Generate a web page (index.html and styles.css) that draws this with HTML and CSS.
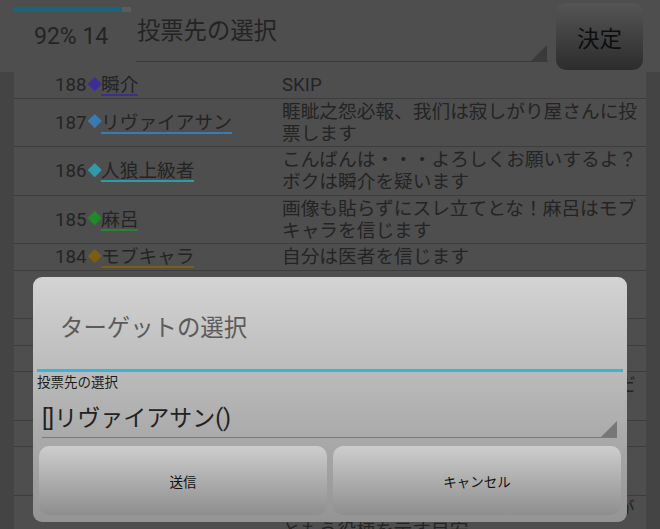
FILE: index.html
```html
<!DOCTYPE html>
<html lang="ja">
<head>
  <meta charset="UTF-8" />
  <meta name="viewport" content="width=device-width, initial-scale=1.0"/>
  <title>投票先の選択</title>
  <link rel="stylesheet" href="styles.css">
</head>
<body>

  <div class="screen">
    <div class="topbar">
      <div class="status">
        <div class="progress"><div class="progress-fill" style="width: 92%"></div></div>
        <div class="count">92% 14</div>
      </div>
      <div class="select">
        <span class="select-text">投票先の選択</span>
        <span class="select-arrow"></span>
      </div>
      <button class="decide-btn">決定</button>
    </div>

    <div class="log">
      <div class="log-row p-purple">
        <div class="who">188<span class="mark"></span><span class="name">瞬介</span></div>
        <div class="msg">SKIP</div>
      </div>
      <div class="log-row p-blue">
        <div class="who">187<span class="mark"></span><span class="name">リヴァイアサン</span></div>
        <div class="msg">睚眦之怨必報、我们は寂しがり屋さんに投票します</div>
      </div>
      <div class="log-row p-teal">
        <div class="who">186<span class="mark"></span><span class="name">人狼上級者</span></div>
        <div class="msg">こんばんは・・・よろしくお願いするよ？ボクは瞬介を疑います</div>
      </div>
      <div class="log-row p-green">
        <div class="who">185<span class="mark"></span><span class="name">麻呂</span></div>
        <div class="msg">画像も貼らずにスレ立てとな！麻呂はモブキャラを信じます</div>
      </div>
      <div class="log-row p-brown">
        <div class="who">184<span class="mark"></span><span class="name">モブキャラ</span></div>
        <div class="msg">自分は医者を信じます</div>
      </div>
      <!-- rows below are covered by the dialog -->
      <div class="log-row">
        <div class="who"></div>
        <div class="msg">&nbsp;<br>&nbsp;</div>
      </div>
      <div class="log-row">
        <div class="who"></div>
        <div class="msg">&nbsp;</div>
      </div>
      <div class="log-row">
        <div class="who"></div>
        <div class="msg">&nbsp;</div>
      </div>
      <div class="log-row">
        <div class="who"></div>
        <div class="msg">今日の投票先はよく考えてから決めてくだ<br>さい</div>
      </div>
      <div class="log-row">
        <div class="who"></div>
        <div class="msg">&nbsp;</div>
      </div>
      <div class="log-row">
        <div class="who"></div>
        <div class="msg">&nbsp;<br>&nbsp;</div>
      </div>
      <div class="log-row">
        <div class="who"></div>
        <div class="msg">結果を待ってから判断しても遅くはないが<br>ともう役柄を示す目安</div>
      </div>
    </div>

    <div class="dialog">
      <div class="dialog-title">ターゲットの選択</div>
      <div class="field-label">投票先の選択</div>
      <div class="spinner">
        <span class="spinner-text">[]リヴァイアサン()</span>
        <span class="spinner-arrow"></span>
      </div>
      <div class="dialog-actions">
        <button class="dialog-btn">送信</button>
        <button class="dialog-btn">キャンセル</button>
      </div>
    </div>
  </div>

</body>
</html>
```

FILE: styles.css
```css
* {
  margin: 0;
  padding: 0;
  box-sizing: border-box;
}

body {
  background: #444;
  font-family: Roboto, "Noto Sans CJK JP", sans-serif;
  color: #242424;
  overflow: hidden;
}

.screen {
  position: relative;
  width: 660px;
  height: 529px;
  overflow: hidden;
}

/* top bar */
.topbar {
  display: flex;
  height: 72px;
  padding-left: 14px;
  background: #4e4e4e;
}

.status {
  width: 122px;
}

.progress {
  width: 117px;
  height: 5px;
  margin-top: 7px;
  background: #5c5c5c;
}

.progress-fill {
  height: 100%;
  background: #1c6479;
}

.count {
  margin-top: 11px;
  padding-left: 20px;
  font-size: 23px;
  line-height: 28px;
}

.select {
  display: flex;
  justify-content: space-between;
  width: 412px;
  height: 62px;
  border-bottom: 1px solid #3a3a3a;
}

.select-text {
  align-self: center;
  padding-left: 1px;
  font-size: 23.3px;
  line-height: 30px;
}

.select-arrow {
  align-self: flex-end;
  width: 0;
  height: 0;
  margin-right: 1px;
  border-left: 16px solid transparent;
  border-bottom: 16px solid #3a3a3a;
}

.decide-btn {
  width: 87px;
  height: 67px;
  margin: 3px 0 0 8px;
  border: none;
  border-radius: 10px;
  background: linear-gradient(#555, #2c2c2c);
  font-family: inherit;
  font-size: 22.5px;
  color: #0e0e0e;
}

/* log list */
.log {
  margin: 0 14px;
  background: #4e4e4e;
}

.log-row {
  display: grid;
  grid-template-columns: 268px 1fr;
  align-items: center;
  padding: 2px 0 1.5px;
  border-bottom: 1px solid #3d3d3d;
  font-size: 18.7px;
  line-height: 22px;
}

.who {
  padding-left: 41px;
  white-space: nowrap;
}

.mark {
  display: inline-block;
  width: 9.5px;
  height: 9.5px;
  margin: 0 2px 0 3px;
  vertical-align: 3px;
  transform: rotate(45deg);
  background: var(--pc);
}

.name {
  background: linear-gradient(var(--pc), var(--pc)) left bottom / 100% 2px no-repeat;
}

.p-purple { --pc: #3c2d9b; }
.p-blue { --pc: #3a7bb0; }
.p-teal { --pc: #2f9aa8; }
.p-green { --pc: #1f8a2a; }
.p-brown { --pc: #7d5c14; }

/* dialog */
.dialog {
  position: absolute;
  left: 33px;
  top: 277px;
  width: 594px;
  height: 245px;
  padding: 0 4px;
  border-radius: 9px;
  background: linear-gradient(#d3d3d3, #949494);
}

.dialog-title {
  display: flex;
  align-items: center;
  height: 95px;
  padding: 6px 0 0 23px;
  border-bottom: 3px solid #37b3e2;
  font-size: 23.4px;
  color: #5b5b5b;
}

.field-label {
  margin-top: 1px;
  font-size: 13.5px;
  line-height: 18px;
  color: #1c1c1c;
}

.spinner {
  display: flex;
  justify-content: space-between;
  align-items: flex-end;
  height: 47px;
  margin: 0 6px 0 5px;
  border-bottom: 1px solid #7a7a7a;
}

.spinner-text {
  margin-bottom: 4px;
  font-size: 23px;
  line-height: 28px;
  color: #222;
}

.spinner-arrow {
  width: 0;
  height: 0;
  border-left: 16px solid transparent;
  border-bottom: 16px solid #777;
}

.dialog-actions {
  display: flex;
  gap: 6px;
  margin: 8px 2px 0;
}

.dialog-btn {
  flex: 1;
  height: 69px;
  border: none;
  border-radius: 10px;
  background: linear-gradient(#cdcdcd, #8e8e8e);
  font-family: inherit;
  font-size: 13.5px;
  color: #111;
}
```
